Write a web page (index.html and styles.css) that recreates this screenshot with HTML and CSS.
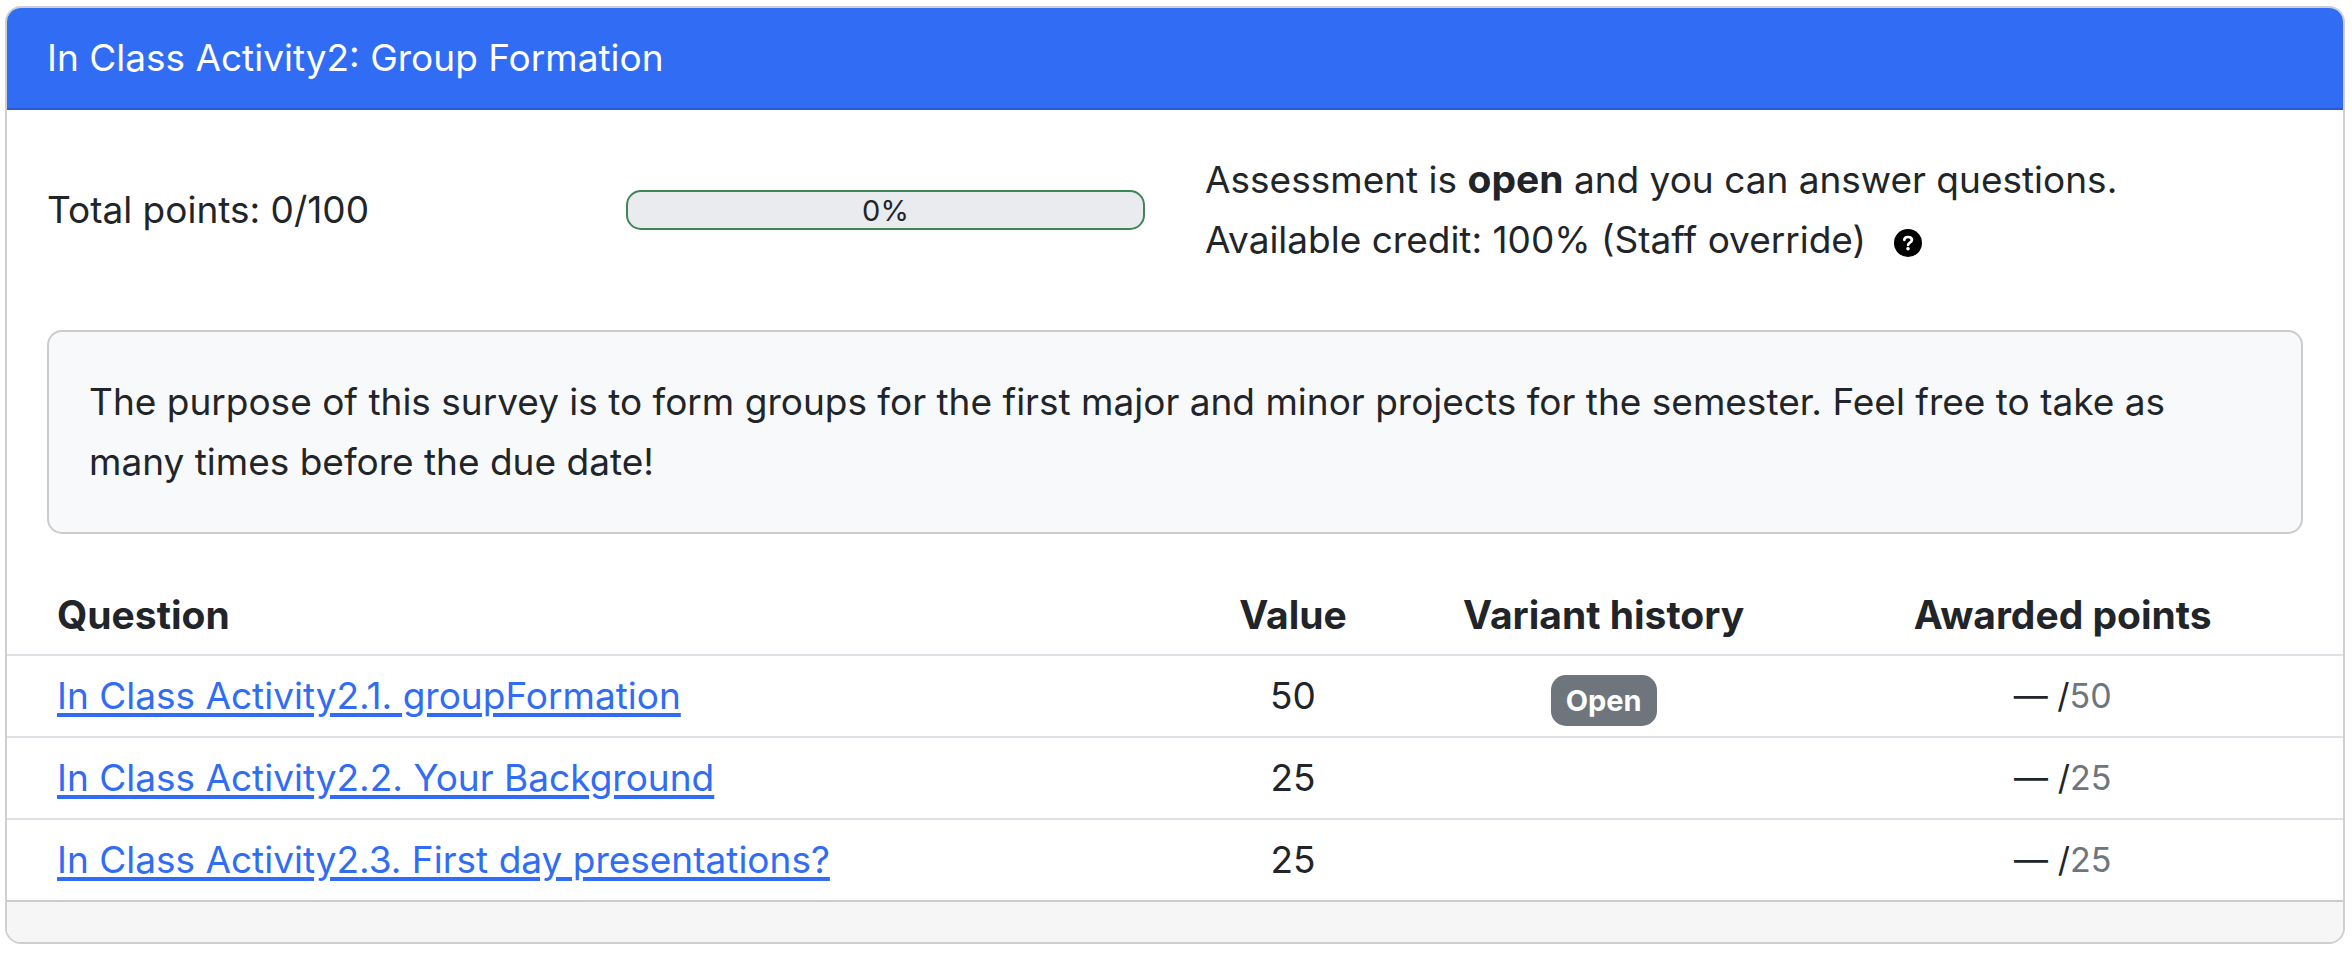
FILE: index.html
```html
<!DOCTYPE html>
<html lang="en">
<head>
<meta charset="utf-8">
<meta name="viewport" content="width=device-width, initial-scale=1">
<title>In Class Activity2: Group Formation</title>
<link rel="stylesheet" href="styles.css">
</head>
<body>
<main class="card">
  <h1 class="card-header">In Class Activity2: Group Formation</h1>
  <div class="card-body">
    <div class="summary">
      <div>Total points: 0/100</div>
      <div class="progress" role="progressbar" aria-label="Total points" aria-valuenow="0" aria-valuemin="0" aria-valuemax="100">0%</div>
      <div class="status">
        <div>Assessment is <strong>open</strong> and you can answer questions.</div>
        <div class="credit">Available credit: 100% (Staff override)
          <button class="help" type="button" aria-label="Credit details">
            <svg class="help-icon" viewBox="0 0 28 28" aria-hidden="true">
              <circle cx="14" cy="14" r="14" fill="#000"/>
              <path d="M10.3 10.8C10.5 8.7 12 8 14 8c2.300 0 3.900 1.100 3.900 3 0 2.700-3.800 2.500-3.800 5" fill="none" stroke="#fff" stroke-width="2.700" stroke-linecap="round"/>
              <circle cx="14" cy="19.700" r="1.800" fill="#fff"/>
            </svg>
          </button>
        </div>
      </div>
    </div>
    <p class="note">The purpose of this survey is to form groups for the first major and minor projects for the semester. Feel free to take as many times before the due date!</p>
  </div>
  <table class="questions">
    <colgroup><col class="col-question"><col class="col-value"><col class="col-history"><col class="col-points"></colgroup>
    <thead>
      <tr><th scope="col">Question</th><th scope="col">Value</th><th scope="col">Variant history</th><th scope="col">Awarded points</th></tr>
    </thead>
    <tbody>
      <tr><td><a class="link" href="#q1">In Class Activity2.1. groupFormation</a></td><td>50</td><td><a class="badge" href="#q1-variant">Open</a></td><td class="score">— /<span class="max">50</span></td></tr>
      <tr><td><a class="link" href="#q2">In Class Activity2.2. Your Background</a></td><td>25</td><td></td><td class="score">— /<span class="max">25</span></td></tr>
      <tr><td><a class="link" href="#q3">In Class Activity2.3. First day presentations?</a></td><td>25</td><td></td><td class="score">— /<span class="max">25</span></td></tr>
    </tbody>
  </table>
  <footer class="card-footer"></footer>
</main>
</body>
</html>
```
FILE: styles.css
```css
* {
  box-sizing: border-box;
}

body {
  margin: 6px 7px 10px 5px;
  background: #fff;
  color: #212529;
  font-family: Inter, "Liberation Sans", sans-serif;
  font-size: 37px;
  line-height: 60px;
}

.card {
  border: 2px solid #cfcfcf;
  border-radius: 16px;
  overflow: hidden;
}

.card-header {
  margin: 0;
  padding: 20px 40px;
  background: #316cf4;
  border-bottom: 2px solid #295bce;
  color: #fff;
  font-size: 37px;
  font-weight: 400;
}

.card-body {
  padding: 40px;
}

.summary {
  display: grid;
  grid-template-columns: repeat(4, 1fr);
  column-gap: 60px;
  align-items: center;
  margin-bottom: 60px;
}

.status {
  grid-column: span 2;
}

.progress {
  height: 40px;
  border: 2px solid #3f8657;
  border-radius: 15px;
  background: #e9ebef;
  font-size: 29px;
  line-height: 38px;
  text-align: center;
}

.credit {
  display: flex;
  align-items: center;
  gap: 28px;
}

.help {
  display: flex;
  margin: 0;
  padding: 6px 0 0;
  border: 0;
  background: none;
}

.help-icon {
  width: 28px;
  height: 28px;
}

.note {
  margin: 0;
  padding: 40px;
  border: 2px solid #cbccce;
  border-radius: 15px;
  background: #f8f9fb;
}

.questions {
  width: 100%;
  border-spacing: 0;
  table-layout: fixed;
}

.col-value {
  width: 11.3%;
}

.col-history {
  width: 15.3%;
}

.col-points {
  width: 24%;
}

.questions th,
.questions td {
  height: 82px;
  padding: 10px;
  border-bottom: 2px solid #dee2e6;
  text-align: center;
}

.questions th,
strong {
  font-size: 39px;
  line-height: 1;
}

.questions th:first-child,
.questions td:first-child {
  padding-left: 50px;
  text-align: left;
}

.questions tbody tr:last-child td {
  height: 80px;
  border-bottom: 0;
}

.link {
  color: #316cf4;
  text-decoration-thickness: 4px;
  text-underline-offset: 4px;
}

.badge {
  display: block;
  width: fit-content;
  margin: 9px auto 0;
  padding: 0 15px;
  border-radius: 15px;
  background: #6e757c;
  color: #fff;
  font-size: 29px;
  font-weight: 700;
  line-height: 51px;
  text-decoration: none;
}

.score {
  font-size: 34px;
}

.max {
  color: #6e757c;
}

.card-footer {
  padding: 20px 40px;
  border-top: 2px solid #cbcbcb;
  background: #f6f6f6;
}
```
